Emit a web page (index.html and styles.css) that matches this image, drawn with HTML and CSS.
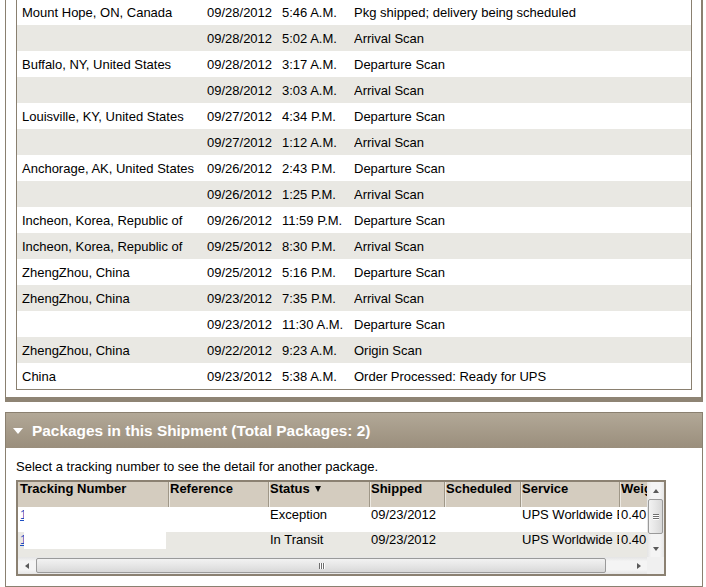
FILE: index.html
```html
<!DOCTYPE html>
<html>
<head>
<meta charset="utf-8">
<link rel="stylesheet" href="styles.css">
</head>
<body>
<div class="page">
  <section class="history">
    <div class="history-box">
      <table class="history-table">
        <colgroup><col class="c-loc"><col class="c-date"><col class="c-time"><col></colgroup>
        <tr><td class="loc">Mount Hope, ON, Canada</td><td>09/28/2012</td><td>5:46 A.M.</td><td>Pkg shipped; delivery being scheduled</td></tr>
        <tr><td class="loc"></td><td>09/28/2012</td><td>5:02 A.M.</td><td>Arrival Scan</td></tr>
        <tr><td class="loc">Buffalo, NY, United States</td><td>09/28/2012</td><td>3:17 A.M.</td><td>Departure Scan</td></tr>
        <tr><td class="loc"></td><td>09/28/2012</td><td>3:03 A.M.</td><td>Arrival Scan</td></tr>
        <tr><td class="loc">Louisville, KY, United States</td><td>09/27/2012</td><td>4:34 P.M.</td><td>Departure Scan</td></tr>
        <tr><td class="loc"></td><td>09/27/2012</td><td>1:12 A.M.</td><td>Arrival Scan</td></tr>
        <tr><td class="loc">Anchorage, AK, United States</td><td>09/26/2012</td><td>2:43 P.M.</td><td>Departure Scan</td></tr>
        <tr><td class="loc"></td><td>09/26/2012</td><td>1:25 P.M.</td><td>Arrival Scan</td></tr>
        <tr><td class="loc">Incheon, Korea, Republic of</td><td>09/26/2012</td><td>11:59 P.M.</td><td>Departure Scan</td></tr>
        <tr><td class="loc">Incheon, Korea, Republic of</td><td>09/25/2012</td><td>8:30 P.M.</td><td>Arrival Scan</td></tr>
        <tr><td class="loc">ZhengZhou, China</td><td>09/25/2012</td><td>5:16 P.M.</td><td>Departure Scan</td></tr>
        <tr><td class="loc">ZhengZhou, China</td><td>09/23/2012</td><td>7:35 P.M.</td><td>Arrival Scan</td></tr>
        <tr><td class="loc"></td><td>09/23/2012</td><td>11:30 A.M.</td><td>Departure Scan</td></tr>
        <tr><td class="loc">ZhengZhou, China</td><td>09/22/2012</td><td>9:23 A.M.</td><td>Origin Scan</td></tr>
        <tr><td class="loc">China</td><td>09/23/2012</td><td>5:38 A.M.</td><td>Order Processed: Ready for UPS</td></tr>
      </table>
    </div>
  </section>

  <section class="packages">
    <div class="pk-head"><span class="tri"></span>Packages in this Shipment (Total Packages: 2)</div>
    <div class="pk-body">
      <p class="pk-note">Select a tracking number to see the detail for another package.</p>
      <div class="grid">
        <div class="gv">
          <table class="pk-table">
            <colgroup>
              <col class="w150"><col class="w100"><col class="w101"><col class="w75"><col class="w76"><col class="w99"><col class="w60">
            </colgroup>
            <tr class="hd">
              <th class="first">Tracking Number</th>
              <th>Reference</th>
              <th>Status<span class="sort"></span></th>
              <th>Shipped</th>
              <th>Scheduled</th>
              <th>Service</th>
              <th>Weight</th>
            </tr>
            <tr>
              <td class="tn"><a href="#" class="link">1</a><span class="redact r1"></span></td>
              <td></td>
              <td>Exception</td>
              <td>09/23/2012</td>
              <td></td>
              <td>UPS Worldwide Expedited</td>
              <td>0.40</td>
            </tr>
            <tr class="alt">
              <td class="tn"><a href="#" class="link">1</a><span class="redact r2"></span></td>
              <td></td>
              <td>In Transit</td>
              <td>09/23/2012</td>
              <td></td>
              <td>UPS Worldwide Expedited</td>
              <td>0.40</td>
            </tr>
          </table>
        </div>
        <div class="vs">
          <div class="sbtn"><span class="ar-up"></span></div>
          <div class="vthumb"><span class="grip-h"></span><span class="grip-h"></span><span class="grip-h"></span></div>
          <div class="vtrack"></div>
          <div class="sbtn"><span class="ar-down"></span></div>
        </div>
        <div class="hs">
          <div class="sbtn"><span class="ar-left"></span></div>
          <div class="hthumb"><span class="grip-v"></span><span class="grip-v"></span><span class="grip-v"></span></div>
          <div class="htrack"></div>
          <div class="sbtn"><span class="ar-right"></span></div>
        </div>
        <div class="corner"></div>
      </div>
    </div>
  </section>
</div>
</body>
</html>
```
FILE: styles.css
```css
* { box-sizing: border-box; }
html, body { margin: 0; padding: 0; background: #fff; }
body {
  font-family: "Liberation Sans", Arial, sans-serif;
  font-size: 13px;
  color: #000;
}
.page { width: 703px; padding-left: 5px; }

/* ---------- shipment history ---------- */
.history {
  margin-top: -1px;
  border-left: 1px solid #8a8070;
  border-right: 2px solid #8a8070;
  border-bottom: 5px solid #8e8474;
  padding: 0 9px 7px 10px;
}
.history-box {
  border: 1px solid #8a8070;
  border-top: 0;
}
.history-table {
  width: 100%;
  border-collapse: collapse;
  table-layout: fixed;
}
.c-loc { width: 190px; }
.c-date { width: 75px; }
.c-time { width: 72px; }
.history-table tr { height: 26px; }
.history-table td {
  padding: 2px 0 0 0;
  line-height: 24px;
  white-space: nowrap;
  overflow: hidden;
}
.history-table td.loc { padding-left: 5px; }
.history-table tr:nth-child(even) td { background: #e9e8e3; }

/* ---------- packages ---------- */
.packages { margin-top: 10px; }
.pk-head {
  height: 36px;
  border: 1px solid #8a8070;
  border-bottom: 0;
  background: linear-gradient(#b2a897, #9a8e7c);
  color: #fff;
  font-weight: bold;
  font-size: 15.4px;
  display: flex;
  align-items: center;
  padding: 0 0 0 7px;
}
.tri {
  width: 0;
  height: 0;
  border-left: 5px solid transparent;
  border-right: 5px solid transparent;
  border-top: 6px solid #fff;
  margin-right: 9px;
}
.pk-body {
  border: 1px solid #8a8070;
  border-top: 0;
  padding: 11px 10px 10px 10px;
}
.pk-note { margin: 0 0 5px; line-height: 16px; }

.grid {
  width: 650px;
  height: 96px;
  border: 2px solid #8b8172;
  display: grid;
  grid-template-columns: 629px 17px;
  grid-template-rows: 75px 17px;
}
.gv { overflow: hidden; }
.pk-table {
  table-layout: fixed;
  width: 661px;
  border-collapse: separate;
  border-spacing: 0;
}
.w150 { width: 150px; }
.w100 { width: 100px; }
.w101 { width: 101px; }
.w75 { width: 75px; }
.w76 { width: 76px; }
.w99 { width: 99px; }
.w60 { width: 60px; }
.pk-table tr { height: 25px; }
.pk-table th,
.pk-table td {
  padding: 1px 0 0 2px;
  line-height: 13px;
  vertical-align: top;
  text-align: left;
  white-space: nowrap;
  overflow: hidden;
}
.pk-table th {
  background: #d4ccbf;
  font-weight: bold;
  padding-top: 0;
  box-shadow: inset 1px 0 #9f9788, inset 2px 0 #ece8e1;
}
.pk-table th.first { box-shadow: none; }
.pk-table tr.alt td { background: #e9e8e3; }
.sort {
  display: inline-block;
  width: 0;
  height: 0;
  border-left: 3px solid transparent;
  border-right: 3px solid transparent;
  border-top: 6px solid #000;
  margin-left: 5px;
  vertical-align: 1px;
}
.tn { position: relative; }
.link { color: #1b4fc3; text-decoration: underline; }
.redact { position: absolute; background: #fff; left: 6px; width: 142px; }
.r1 { top: -2px; height: 20px; }
.r2 { top: 0; height: 17px; }

/* ---------- fake scrollbars ---------- */
.vs {
  display: flex;
  flex-direction: column;
  align-items: center;
  background: linear-gradient(90deg, #e4e4e4, #f4f4f4 25%, #f4f4f4 75%, #e6e6e6);
}
.hs {
  display: flex;
  align-items: center;
  background: linear-gradient(#e4e4e4, #f4f4f4 25%, #f4f4f4 75%, #e6e6e6);
}
.corner { background: #f0f0f0; }
.sbtn {
  width: 17px;
  height: 17px;
  flex: none;
  display: flex;
  align-items: center;
  justify-content: center;
}
.vtrack, .htrack { flex: 1; }
.vthumb {
  width: 15px;
  height: 35px;
  flex: none;
  border: 1px solid #9a9a9a;
  border-radius: 2px;
  background: linear-gradient(90deg, #f2f2f2, #e6e6e6 50%, #d8d8d8);
  display: flex;
  flex-direction: column;
  align-items: center;
  justify-content: center;
  gap: 1px;
}
.hthumb {
  width: 570px;
  height: 15px;
  flex: none;
  margin-left: 1px;
  border: 1px solid #9a9a9a;
  border-radius: 2px;
  background: linear-gradient(#f2f2f2, #e6e6e6 50%, #d8d8d8);
  display: flex;
  align-items: center;
  justify-content: center;
  gap: 1px;
}
.grip-h { width: 6px; height: 1px; background: #6e6e6e; box-shadow: 0 1px #fff; }
.grip-v { width: 1px; height: 6px; background: #6e6e6e; box-shadow: 1px 0 #fff; }
.ar-up, .ar-down, .ar-left, .ar-right { width: 0; height: 0; display: block; }
.ar-up { border-left: 3px solid transparent; border-right: 3px solid transparent; border-bottom: 4px solid #5a5a5a; }
.ar-down { border-left: 3px solid transparent; border-right: 3px solid transparent; border-top: 4px solid #5a5a5a; }
.ar-left { border-top: 3px solid transparent; border-bottom: 3px solid transparent; border-right: 4px solid #5a5a5a; }
.ar-right { border-top: 3px solid transparent; border-bottom: 3px solid transparent; border-left: 4px solid #5a5a5a; }
```
